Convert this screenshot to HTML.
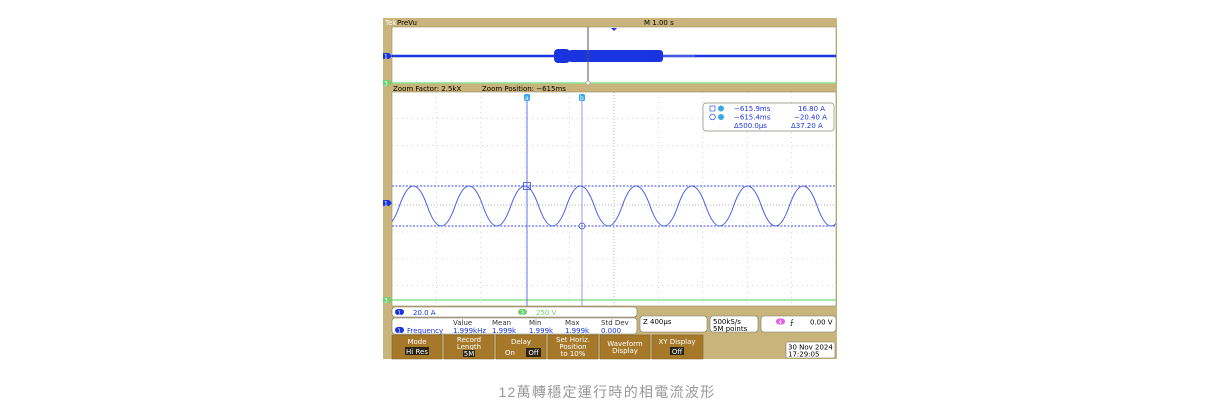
<!DOCTYPE html>
<html><head><meta charset="utf-8"><style>
body{margin:0;width:1220px;height:400px;background:#fff;overflow:hidden}
svg{position:absolute;left:0;top:0}
.cap{position:absolute;left:0;width:1214px;top:382px;text-align:center;font:14px "Liberation Sans","Noto Sans CJK TC",sans-serif;color:#999;letter-spacing:1.3px}
text{font-family:"DejaVu Sans","Liberation Sans",sans-serif}
</style></head><body>
<svg width="1220" height="400" viewBox="0 0 1220 400">
<defs><clipPath id="pc"><rect x="392" y="92" width="444" height="214"/></clipPath></defs>
<rect x="383" y="18" width="454" height="341" fill="#c9b47c"/>
<text x="385" y="25" font-size="7" fill="#fff">Tek</text>
<text x="397" y="25" font-size="7" fill="#000">PreVu</text>
<text x="644" y="25" font-size="7" fill="#000">M 1.00 s</text>
<rect x="392" y="27" width="444" height="56" fill="#fff" stroke="#9a8a5a" stroke-width="0.6"/>
<line x1="392" y1="83" x2="836" y2="83" stroke="#8de08d" stroke-width="1.5"/>
<line x1="392" y1="56" x2="836" y2="56" stroke="#1a35e0" stroke-width="2.5"/>
<rect x="554" y="49" width="16" height="14" rx="4" fill="#1a35e0"/>
<rect x="568" y="50" width="95" height="12" rx="3" fill="#1a35e0"/>
<line x1="663" y1="56" x2="695" y2="56" stroke="#6a80f0" stroke-width="1"/>
<line x1="588" y1="27" x2="588" y2="83" stroke="#555" stroke-width="1"/>
<path d="M611 28 L617 28 L614 31Z" fill="#1a35e0"/>
<circle cx="588" cy="83" r="2" fill="#fff" stroke="#888" stroke-width="0.6"/>
<path d="M383 53 h6 l3 3 l-3 3 h-6z" fill="#1a35e0"/><text x="384" y="58.5" font-size="6" fill="#fff">1</text>
<path d="M383 80 h6 l3 3 l-3 3 h-6z" fill="#6fd06f"/><text x="384" y="85.5" font-size="6" fill="#fff">3</text>
<text x="393" y="91" font-size="7" fill="#000">Zoom Factor: 2.5kX</text>
<text x="482" y="91" font-size="7" fill="#000">Zoom Position: −615ms</text>
<rect x="392" y="92" width="444" height="214" fill="#fff" stroke="#9a8a5a" stroke-width="0.6"/>
<g stroke="#bbb" stroke-width="0.6" stroke-dasharray="1,4">
<line x1="436.4" y1="92" x2="436.4" y2="306"/><line x1="480.8" y1="92" x2="480.8" y2="306"/><line x1="525.2" y1="92" x2="525.2" y2="306"/><line x1="569.6" y1="92" x2="569.6" y2="306"/><line x1="658.4" y1="92" x2="658.4" y2="306"/><line x1="702.8" y1="92" x2="702.8" y2="306"/><line x1="747.2" y1="92" x2="747.2" y2="306"/><line x1="791.6" y1="92" x2="791.6" y2="306"/>
<line x1="392" y1="118.7" x2="836" y2="118.7"/><line x1="392" y1="145.4" x2="836" y2="145.4"/><line x1="392" y1="172" x2="836" y2="172"/><line x1="392" y1="232" x2="836" y2="232"/><line x1="392" y1="259" x2="836" y2="259"/><line x1="392" y1="285.7" x2="836" y2="285.7"/>
</g>
<g stroke="#999" stroke-width="0.7" stroke-dasharray="1,2">
<line x1="614" y1="92" x2="614" y2="306"/><line x1="392" y1="205" x2="836" y2="205"/>
</g>
<line x1="392" y1="300" x2="836" y2="300" stroke="#8de08d" stroke-width="1.5"/>
<g stroke="#3a4ee0" stroke-width="0.9" stroke-dasharray="2,1.5">
<line x1="392" y1="186" x2="836" y2="186"/><line x1="392" y1="226" x2="836" y2="226"/>
</g>
<line x1="527" y1="100" x2="527" y2="306" stroke="#5566e8" stroke-width="0.9"/>
<line x1="582" y1="100" x2="582" y2="306" stroke="#8890ee" stroke-width="0.9"/>
<rect x="524" y="94" width="6" height="7" rx="1.5" fill="#3aa8e8"/><text x="525" y="100" font-size="6" fill="#fff">a</text>
<rect x="579" y="94" width="6" height="7" rx="1.5" fill="#3aa8e8"/><text x="580" y="100" font-size="6" fill="#fff">b</text>
<g clip-path="url(#pc)">
<path d="M343.7 206 Q357.6 166 371.55 206 T399.4 206 T427.25 206 T455.1 206 T482.95 206 T510.8 206 T538.65 206 T566.5 206 T594.35 206 T622.2 206 T650.05 206 T677.9 206 T705.75 206 T733.6 206 T761.45 206 T789.3 206 T817.15 206 T845 206" fill="none" stroke="#4a5ce6" stroke-width="1"/>
</g>
<rect x="523.5" y="182.5" width="7" height="7" fill="none" stroke="#3a4ee0" stroke-width="0.8"/>
<circle cx="582" cy="226" r="3" fill="none" stroke="#3a4ee0" stroke-width="0.8"/>
<path d="M383 200 h6 l3 3 l-3 3 h-6z" fill="#1a35e0"/><text x="384" y="205.5" font-size="6" fill="#fff">1</text>
<path d="M383 297 h6 l3 3 l-3 3 h-6z" fill="#6fd06f"/><text x="384" y="302.5" font-size="6" fill="#fff">3</text>
<rect x="703" y="103" width="131" height="28" rx="3" fill="#fff" stroke="#887" stroke-width="0.7"/>
<g font-size="7" fill="#1a35e0">
<rect x="710" y="106" width="5" height="5" fill="none" stroke="#1a35e0" stroke-width="0.6"/><circle cx="721" cy="108.5" r="3" fill="#3aa8e8"/>
<text x="734" y="111">−615.9ms</text><text x="798" y="111">16.80 A</text>
<circle cx="712.5" cy="117" r="2.8" fill="none" stroke="#1a35e0" stroke-width="0.6"/><circle cx="721" cy="117" r="3" fill="#3aa8e8"/>
<text x="734" y="119.5">−615.4ms</text><text x="794" y="119.5">−20.40 A</text>
<text x="734" y="128">Δ500.0μs</text><text x="791" y="128">Δ37.20 A</text>
</g>
<rect x="392" y="307" width="245" height="10" rx="3" fill="#fff" stroke="#776" stroke-width="0.6"/>
<rect x="395" y="309" width="9" height="6" rx="3" fill="#1a35e0"/><text x="397.5" y="314.5" font-size="5.5" fill="#fff">1</text>
<text x="413" y="315" font-size="7" fill="#1a35e0">20.0 A</text>
<rect x="518" y="309" width="9" height="6" rx="3" fill="#6fd06f"/><text x="520.5" y="314.5" font-size="5.5" fill="#fff">3</text>
<text x="536" y="315" font-size="7" fill="#6fd06f">250 V</text>
<rect x="392" y="318" width="245" height="16" rx="3" fill="#fff" stroke="#776" stroke-width="0.6"/>
<g font-size="7" fill="#1a35e0">
<text x="453" y="325" fill="#333">Value</text><text x="492" y="325" fill="#333">Mean</text><text x="529" y="325" fill="#333">Min</text><text x="565" y="325" fill="#333">Max</text><text x="601" y="325" fill="#333">Std Dev</text>
<rect x="395" y="327" width="9" height="6" rx="3" fill="#1a35e0"/><text x="397.5" y="332.5" font-size="5.5" fill="#fff">1</text>
<text x="407" y="333">Frequency</text><text x="453" y="333">1.999kHz</text><text x="492" y="333">1.999k</text><text x="529" y="333">1.999k</text><text x="565" y="333">1.999k</text><text x="601" y="333">0.000</text>
</g>
<rect x="640" y="316" width="67" height="16" rx="3" fill="#fff" stroke="#776" stroke-width="0.6"/>
<text x="643" y="324" font-size="7" fill="#000">Z 400μs</text>
<rect x="710" y="316" width="48" height="16" rx="3" fill="#fff" stroke="#776" stroke-width="0.6"/>
<text x="713" y="324" font-size="7" fill="#000">500kS/s</text><text x="713" y="331" font-size="7" fill="#000">5M points</text>
<rect x="761" y="316" width="75" height="16" rx="3" fill="#fff" stroke="#776" stroke-width="0.6"/>
<rect x="776" y="318.5" width="9" height="6" rx="3" fill="#e060e0"/><text x="778.5" y="324" font-size="5.5" fill="#fff">4</text>
<text x="790" y="324.5" font-size="7" fill="#000">⨍</text><text x="810" y="324.5" font-size="7" fill="#000">0.00 V</text>
<g fill="#a6792a" stroke="#7a5a1a" stroke-width="0.5">
<rect x="392" y="335" width="50" height="24"/><rect x="444" y="335" width="50" height="24"/><rect x="496" y="335" width="50" height="24"/><rect x="548" y="335" width="50" height="24"/><rect x="600" y="335" width="50" height="24"/><rect x="652" y="335" width="51" height="24"/>
</g>
<g font-size="7" fill="#fff" text-anchor="middle">
<text x="417" y="344">Mode</text><rect x="405" y="347" width="24" height="8" fill="#2a2418"/><text x="417" y="354">Hi Res</text>
<text x="469" y="342">Record</text><text x="469" y="349">Length</text><rect x="463" y="350" width="12" height="7" fill="#2a2418"/><text x="469" y="356">5M</text>
<text x="521" y="344">Delay</text><text x="510" y="355">On</text><rect x="526" y="348" width="15" height="9" fill="#2a2418"/><text x="533.5" y="355">Off</text>
<text x="573" y="342">Set Horiz.</text><text x="573" y="349">Position</text><text x="573" y="356">to 10%</text>
<text x="625" y="346">Waveform</text><text x="625" y="353">Display</text>
<text x="677" y="344">XY Display</text><rect x="670" y="347" width="14" height="8" fill="#2a2418"/><text x="677" y="354">Off</text>
</g>
<rect x="786" y="342" width="49" height="16" rx="2" fill="#fff" stroke="#776" stroke-width="0.6"/>
<text x="788" y="349.5" font-size="7" fill="#000">30 Nov 2024</text><text x="788" y="356.5" font-size="7" fill="#000">17:29:05</text>
</svg>
<div class="cap">12萬轉穩定運行時的相電流波形</div>
</body></html>
